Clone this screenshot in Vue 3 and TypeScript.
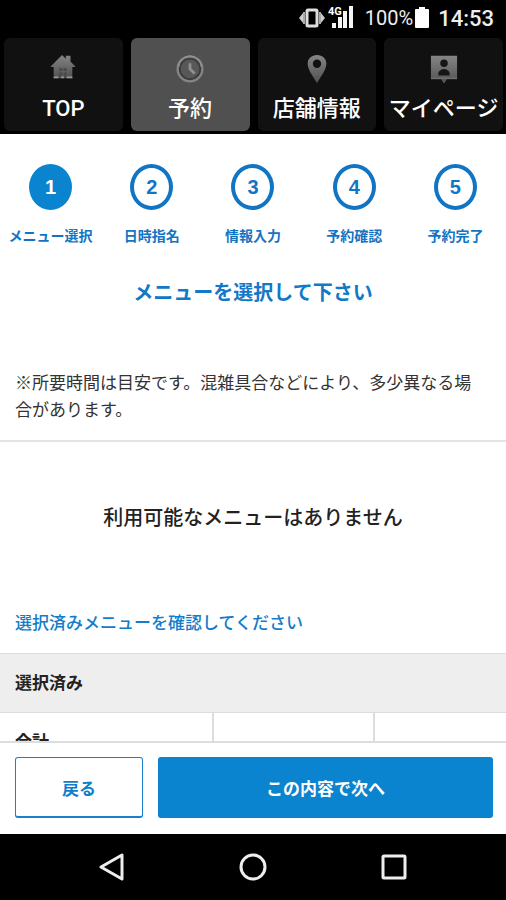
<script setup lang="ts">
import { ref } from 'vue'

type TabIcon = 'home' | 'clock' | 'pin' | 'person'

interface Tab {
  label: string
  icon: TabIcon
}

const tabs: Tab[] = [
  { label: 'TOP', icon: 'home' },
  { label: '予約', icon: 'clock' },
  { label: '店舗情報', icon: 'pin' },
  { label: 'マイページ', icon: 'person' },
]
const activeTab = ref(1)

const steps: string[] = ['メニュー選択', '日時指名', '情報入力', '予約確認', '予約完了']
const currentStep = ref(0)
</script>

<template>
  <div class="screen">
    <header class="status">
      <svg class="vibrate" viewBox="0 0 26 20" width="26" height="20">
        <path d="M0 10 4 5v10zM26 10l-4-5v10z" fill="#ccc" />
        <path d="M5 4v12M21 4v12" stroke="#aaa" stroke-width="2" />
        <rect x="8" y="2" width="10" height="16" rx="1" fill="none" stroke="#ddd" stroke-width="3" />
      </svg>
      <svg class="signal" viewBox="0 0 26 24" width="26" height="24">
        <g fill="#f4f4f4">
          <rect x="4" y="18" width="4" height="5" />
          <rect x="10" y="12" width="4" height="11" />
          <rect x="15" y="6" width="4" height="17" />
          <rect x="21" y="1" width="4" height="22" />
        </g>
        <text x="0" y="10" class="network">4G</text>
      </svg>
      <span class="charge">100%</span>
      <svg class="battery" viewBox="0 0 14 21" width="14" height="21">
        <path d="M4 0h6v2h3q1 0 1 1v17q0 1-1 1H1q-1 0-1-1V3q0-1 1-1h3z" fill="#fff" />
      </svg>
      <time class="time">14:53</time>
    </header>

    <nav class="tabs">
      <a
        v-for="(tab, i) in tabs"
        :key="tab.label"
        href="#"
        class="tab"
        :class="{ active: i === activeTab }"
        @click.prevent="activeTab = i"
      >
        <svg class="tab-icon" viewBox="0 0 30 32" width="30" height="32">
          <defs>
            <linearGradient :id="'shade-' + tab.icon" x1="0" y1="0" x2="0" y2="1">
              <stop offset="0" stop-color="#858585" />
              <stop offset="1" stop-color="#505050" />
            </linearGradient>
          </defs>
          <template v-if="tab.icon === 'home'">
            <path d="M2 14 14 2l4 4V3h5v6l5 5v1h-3v12H5V15H2z" fill="url(#shade-home)" />
            <path d="M11 16h8v10h-8z" fill="#4c4c4c" />
            <path d="M15 16v10M11 20h8" stroke="#666" stroke-width="1" />
            <path d="M5 26h5M13 26h3M19 26h6" stroke="#999" stroke-width="2" />
          </template>
          <template v-else-if="tab.icon === 'clock'">
            <circle cx="15" cy="17" r="13" fill="none" stroke="#858585" stroke-width="3" />
            <circle cx="15" cy="17" r="11" fill="#585858" stroke="#3c3c3c" stroke-width="2" />
            <path d="M3 15a12 12 0 0 1 24 0" fill="none" stroke="#999" stroke-width="1" />
            <path d="M15 11v6l5 5" fill="none" stroke="#909090" stroke-width="3" />
          </template>
          <template v-else-if="tab.icon === 'pin'">
            <path
              fill-rule="evenodd"
              d="M15 2c6 0 10 4 10 9 0 7-5 13-10 21C10 24 5 18 5 11c0-5 4-9 10-9zm0 5a4 4 0 1 0 0 9 4 4 0 0 0 0-9z"
              fill="url(#shade-pin)"
            />
          </template>
          <template v-else>
            <path d="M1 3h28v25H18l-3 5-3-5H1z" fill="url(#shade-person)" />
            <path d="M1 27h28" stroke="#777" stroke-width="1" />
            <circle cx="15" cy="11" r="4" fill="#161616" />
            <path d="M9 24v-3q2-4 6-4t6 4v3z" fill="#161616" />
          </template>
        </svg>
        <span>{{ tab.label }}</span>
      </a>
    </nav>

    <main class="content">
      <ol class="steps">
        <li v-for="(step, i) in steps" :key="step" class="step" :class="{ current: i === currentStep }">
          <span class="number">{{ i + 1 }}</span>
          <span>{{ step }}</span>
        </li>
      </ol>

      <h1 class="title">メニューを選択して下さい</h1>
      <p class="note">※所要時間は目安です。混雑具合などにより、多少異なる場合があります。</p>
      <p class="empty">利用可能なメニューはありません</p>
      <h2 class="subtitle">選択済みメニューを確認してください</h2>

      <table class="selected">
        <colgroup>
          <col class="col-name" />
          <col class="col-time" />
          <col />
        </colgroup>
        <thead>
          <tr><th colspan="3" scope="colgroup">選択済み</th></tr>
        </thead>
        <tbody>
          <tr>
            <th scope="row">合計</th>
            <td></td>
            <td></td>
          </tr>
        </tbody>
      </table>
    </main>

    <footer class="actions">
      <button type="button" class="button back">戻る</button>
      <button type="button" class="button next">この内容で次へ</button>
    </footer>

    <div class="system">
      <button type="button" class="key" aria-label="Back">
        <svg viewBox="0 0 28 28" width="28" height="28">
          <path d="M24 2v24L3 14z" />
        </svg>
      </button>
      <button type="button" class="key" aria-label="Home">
        <svg viewBox="0 0 28 28" width="28" height="28">
          <circle cx="14" cy="14" r="12" />
        </svg>
      </button>
      <button type="button" class="key" aria-label="Recent apps">
        <svg viewBox="0 0 28 28" width="28" height="28">
          <rect x="3" y="3" width="22" height="22" rx="1" />
        </svg>
      </button>
    </div>
  </div>
</template>

<style>
body {
  margin: 0;
}
</style>

<style scoped>
.screen {
  display: flex;
  flex-direction: column;
  height: 100vh;
  box-sizing: border-box;
  overflow: hidden;
  background: #fff;
  color: #222;
  font-family: Roboto, 'Noto Sans CJK JP', sans-serif;
}

.status {
  display: flex;
  flex: none;
  align-items: center;
  justify-content: flex-end;
  height: 36px;
  padding: 0 12px 2px 0;
  background: #000;
  color: #eee;
}
.signal {
  margin: 0 11px 2px 3px;
}
.network {
  font-size: 11px;
  font-weight: 700;
  fill: #fff;
  stroke: #000;
  stroke-width: 2px;
  paint-order: stroke;
}
.charge {
  font-size: 20px;
}
.battery {
  margin: 0 9px 2px 2px;
}
.time {
  font-size: 22px;
  font-weight: 500;
}

.tabs {
  display: grid;
  flex: none;
  grid-template-columns: repeat(4, minmax(0, 1fr));
  gap: 8px;
  padding: 0 3px 3px 4px;
  background: #000;
}
.tab {
  display: flex;
  flex-direction: column;
  align-items: center;
  height: 78px;
  padding-top: 15px;
  border-radius: 6px;
  background: #111;
  color: #fff;
  font-size: 22px;
  font-weight: 500;
  line-height: 32px;
  text-decoration: none;
  white-space: nowrap;
}
.tab.active {
  background: #505050;
}
.tab-icon {
  width: 28px;
  height: 30px;
  margin-bottom: 10px;
}

.content {
  flex: 1;
  min-height: 0;
  overflow: hidden;
}
.steps {
  display: grid;
  grid-template-columns: repeat(5, minmax(0, 1fr));
  margin: 0;
  padding: 30px 0 0;
  list-style: none;
}
.step {
  display: flex;
  flex-direction: column;
  align-items: center;
  gap: 15px;
  color: #1275c4;
  font-size: 14px;
  font-weight: 700;
  line-height: 22px;
  white-space: nowrap;
}
.number {
  display: flex;
  align-items: center;
  justify-content: center;
  width: 43px;
  height: 46px;
  border: 4px solid #1275c4;
  border-radius: 50%;
  box-sizing: border-box;
  font-family: 'Liberation Sans', sans-serif;
  font-size: 20px;
}
.current .number {
  border-color: #0b84d0;
  background: #0b84d0;
  color: #fff;
}

.title {
  margin: 0;
  padding-top: 31px;
  color: #1278c8;
  font-size: 20px;
  font-weight: 700;
  line-height: 30px;
  text-align: center;
}
.note {
  margin: 0;
  padding: 62px 28px 16px 15px;
  border-bottom: 2px solid #e4e4e4;
  color: #333;
  font-size: 17px;
  line-height: 27px;
}
.empty {
  margin: 0;
  padding: 61px 15px;
  font-size: 20px;
  font-weight: 500;
  line-height: 30px;
  text-align: center;
}
.subtitle {
  margin: 0;
  padding: 16px 15px;
  color: #127dca;
  font-size: 17px;
  font-weight: 500;
  line-height: 27px;
}
.selected {
  width: 100%;
  border-collapse: collapse;
  table-layout: fixed;
}
.col-name {
  width: 42%;
}
.col-time {
  width: 32%;
}
.selected th,
.selected td {
  height: 58px;
  padding: 0 15px;
  border: 1px solid #ddd;
  border-width: 1px 0;
  font-size: 17px;
  font-weight: 700;
  line-height: 27px;
  text-align: left;
}
.selected thead th {
  background: #eee;
}
.selected td {
  border-left-width: 2px;
}

.actions {
  display: grid;
  flex: none;
  grid-template-columns: 128fr 335fr;
  gap: 15px;
  padding: 14px 13px 16px 15px;
  border-top: 2px solid #ddd;
  background: #fff;
}
.button {
  height: 61px;
  padding: 0;
  border: 1px solid #1b7fcc;
  border-bottom-width: 2px;
  border-radius: 3px;
  font-family: inherit;
  font-size: 17px;
  font-weight: 700;
}
.back {
  background: #fff;
  color: #127dca;
}
.next {
  border-color: #0b84d0;
  background: #0b84d0;
  color: #fff;
}

.system {
  display: flex;
  flex: none;
  justify-content: center;
  gap: 113px;
  padding: 19px 0;
  background: #000;
}
.key {
  display: flex;
  padding: 0;
  border: 0;
  background: none;
}
.key svg {
  fill: none;
  stroke: #eee;
  stroke-width: 3px;
  stroke-linejoin: round;
}
</style>
